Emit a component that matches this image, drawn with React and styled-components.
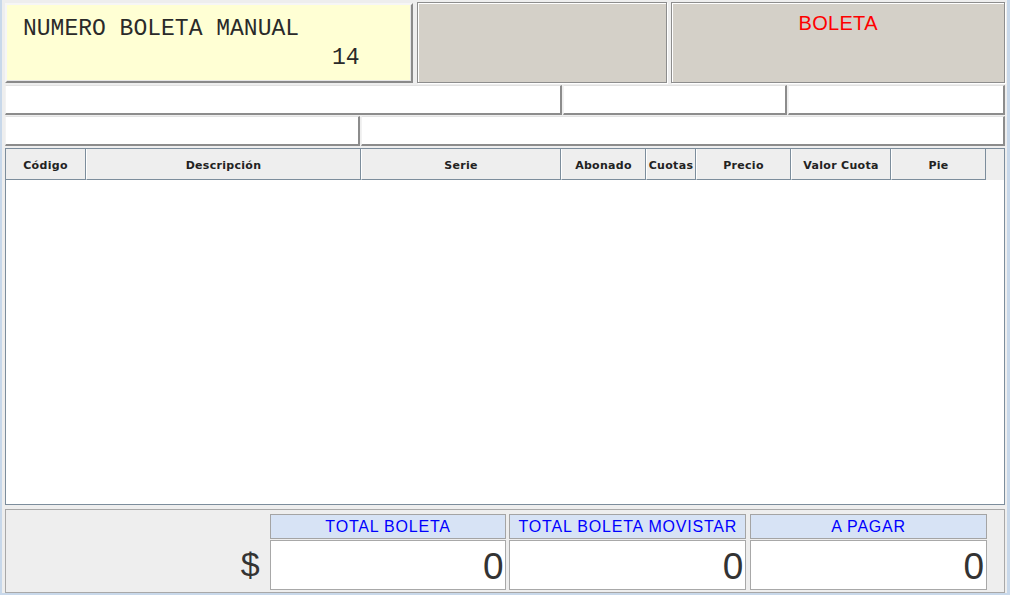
import React from 'react';
import styled, { createGlobalStyle } from 'styled-components';

const GlobalStyle = createGlobalStyle`
  html, body {
    margin: 0;
    padding: 0;
    background: #eeeeee;
  }
`;

const Frame = styled.div`
  box-sizing: border-box;
  width: 1010px;
  height: 595px;
  background: #eeeeee;
  border-left: 2px solid #c8d8ea;
  border-right: 3px solid #c8d8ea;
  border-bottom: 2px solid #c8d8ea;
  padding: 2px 2px 0 3px;
  display: flex;
  flex-direction: column;
  font-family: 'Liberation Sans', Arial, sans-serif;
  overflow: hidden;
`;

const TopRow = styled.div`
  display: flex;
  gap: 4px;
  height: 81px;
`;

const ManualBox = styled.div`
  box-sizing: border-box;
  width: 408px;
  margin-top: 1px;
  height: 80px;
  background: #ffffd4;
  border: 2px solid;
  border-color: #f6f6f6 #8a8a8a #8a8a8a #f6f6f6;
  box-shadow: inset -1px -1px 0 #e6e6e6;
  padding: 11px 0 0 16px;
  font-family: 'Liberation Mono', 'Courier New', monospace;
  font-size: 23px;
  color: #2a2a2a;
  line-height: 27px;
`;

const ManualNumber = styled.div`
  text-align: right;
  padding-right: 51px;
  margin-top: 2px;
`;

const GreyPanel = styled.div`
  box-sizing: border-box;
  width: ${(p) => p.$w}px;
  height: 81px;
  background: #d4d0c8;
  border: 1px solid #8d8d8d;
  box-shadow: inset 1px 1px 0 #ffffff, 1px 1px 0 #ffffff;
  color: #ff0000;
  font-size: 20px;
  text-align: center;
  padding-top: 9px;
  letter-spacing: 0.3px;
`;

const FieldRow = styled.div`
  display: flex;
  gap: 1px;
  height: ${(p) => p.$h}px;
  margin-top: ${(p) => p.$mt}px;
`;

const Field = styled.div`
  box-sizing: border-box;
  width: ${(p) => p.$w}px;
  flex: ${(p) => (p.$w ? 'none' : '1')};
  background: #ffffff;
  border-top: 1px solid #e2e2e2;
  border-left: 1px solid #f2f2f2;
  border-right: 2px solid #8c8c8c;
  border-bottom: 2px solid #8c8c8c;
`;

const Table = styled.div`
  box-sizing: border-box;
  margin-top: 2px;
  height: 357px;
  border: 1px solid #7c8d9c;
  background: #ffffff;
  display: flex;
  flex-direction: column;
`;

const HeaderRow = styled.div`
  display: flex;
  height: 31px;
  background: #eeeeee;
`;

const HeaderCell = styled.div`
  box-sizing: border-box;
  width: ${(p) => p.$w}px;
  flex: ${(p) => (p.$w ? 'none' : '1')};
  border-right: 1px solid #7c8d9c;
  border-bottom: 1px solid #7c8d9c;
  border-left: ${(p) => (p.$first ? 'none' : '1px solid #ffffff')};
  display: flex;
  align-items: center;
  justify-content: center;
  padding-top: 2px;
  font-family: 'DejaVu Sans', Verdana, sans-serif;
  font-weight: bold;
  font-size: 11px;
  color: #222;
  letter-spacing: 0.3px;
  white-space: nowrap;
  overflow: hidden;
`;

const HeaderFiller = styled.div`
  flex: 1;
  background: #eeeeee;
`;

const TableBody = styled.div`
  flex: 1;
  background: #ffffff;
`;

const TotalsPanel = styled.div`
  box-sizing: border-box;
  margin-top: 4px;
  height: 84px;
  border: 1px solid #a8a8a8;
  background: #eeeeee;
  display: flex;
  padding: 4px 17px 0 0;
`;

const Currency = styled.div`
  width: 264px;
  box-sizing: border-box;
  padding-right: 10px;
  text-align: right;
  font-size: 34px;
  color: #333;
  padding-top: 31px;
`;

const TotalCol = styled.div`
  width: 237px;
  margin-right: ${(p) => p.$mr}px;
  display: flex;
  flex-direction: column;
  gap: 1px;
`;

const TotalLabel = styled.div`
  box-sizing: border-box;
  height: 25px;
  background: #d7e3f5;
  border: 1px solid #a4a4a4;
  color: #0000ff;
  font-size: 16px;
  text-align: center;
  line-height: 24px;
  letter-spacing: 0.8px;
  white-space: nowrap;
`;

const TotalValue = styled.div`
  box-sizing: border-box;
  height: 50px;
  background: #ffffff;
  border: 1px solid #a8a8a8;
  text-align: right;
  padding-right: 2px;
  font-size: 37px;
  line-height: 52px;
  color: #333;
`;

const columns = [
  { label: 'Código', w: 80 },
  { label: 'Descripción', w: 275 },
  { label: 'Serie', w: 200 },
  { label: 'Abonado', w: 85 },
  { label: 'Cuotas', w: 50 },
  { label: 'Precio', w: 95 },
  { label: 'Valor Cuota', w: 100 },
  { label: 'Pie', w: 95 },
];

const totals = [
  { label: 'TOTAL BOLETA', value: 0, mr: 3 },
  { label: 'TOTAL BOLETA MOVISTAR', value: 0, mr: 4 },
  { label: 'A PAGAR', value: 0, mr: 0 },
];

export default function App() {
  return (
    <>
      <GlobalStyle />
      <Frame>
        <TopRow>
          <ManualBox>
            NUMERO BOLETA MANUAL
            <ManualNumber>14</ManualNumber>
          </ManualBox>
          <GreyPanel $w={251} />
          <GreyPanel $w={334}>BOLETA</GreyPanel>
        </TopRow>

        <FieldRow $h={30} $mt={2}>
          <Field $w={557} />
          <Field $w={224} />
          <Field />
        </FieldRow>
        <FieldRow $h={30} $mt={1}>
          <Field $w={355} />
          <Field />
        </FieldRow>

        <Table>
          <HeaderRow>
            {columns.map((c, i) => (
              <HeaderCell key={c.label} $w={c.w} $first={i === 0}>
                {c.label}
              </HeaderCell>
            ))}
            <HeaderFiller />
          </HeaderRow>
          <TableBody />
        </Table>

        <TotalsPanel>
          <Currency>$</Currency>
          {totals.map((t) => (
            <TotalCol key={t.label} $mr={t.mr}>
              <TotalLabel>{t.label}</TotalLabel>
              <TotalValue>{t.value}</TotalValue>
            </TotalCol>
          ))}
        </TotalsPanel>
      </Frame>
    </>
  );
}
